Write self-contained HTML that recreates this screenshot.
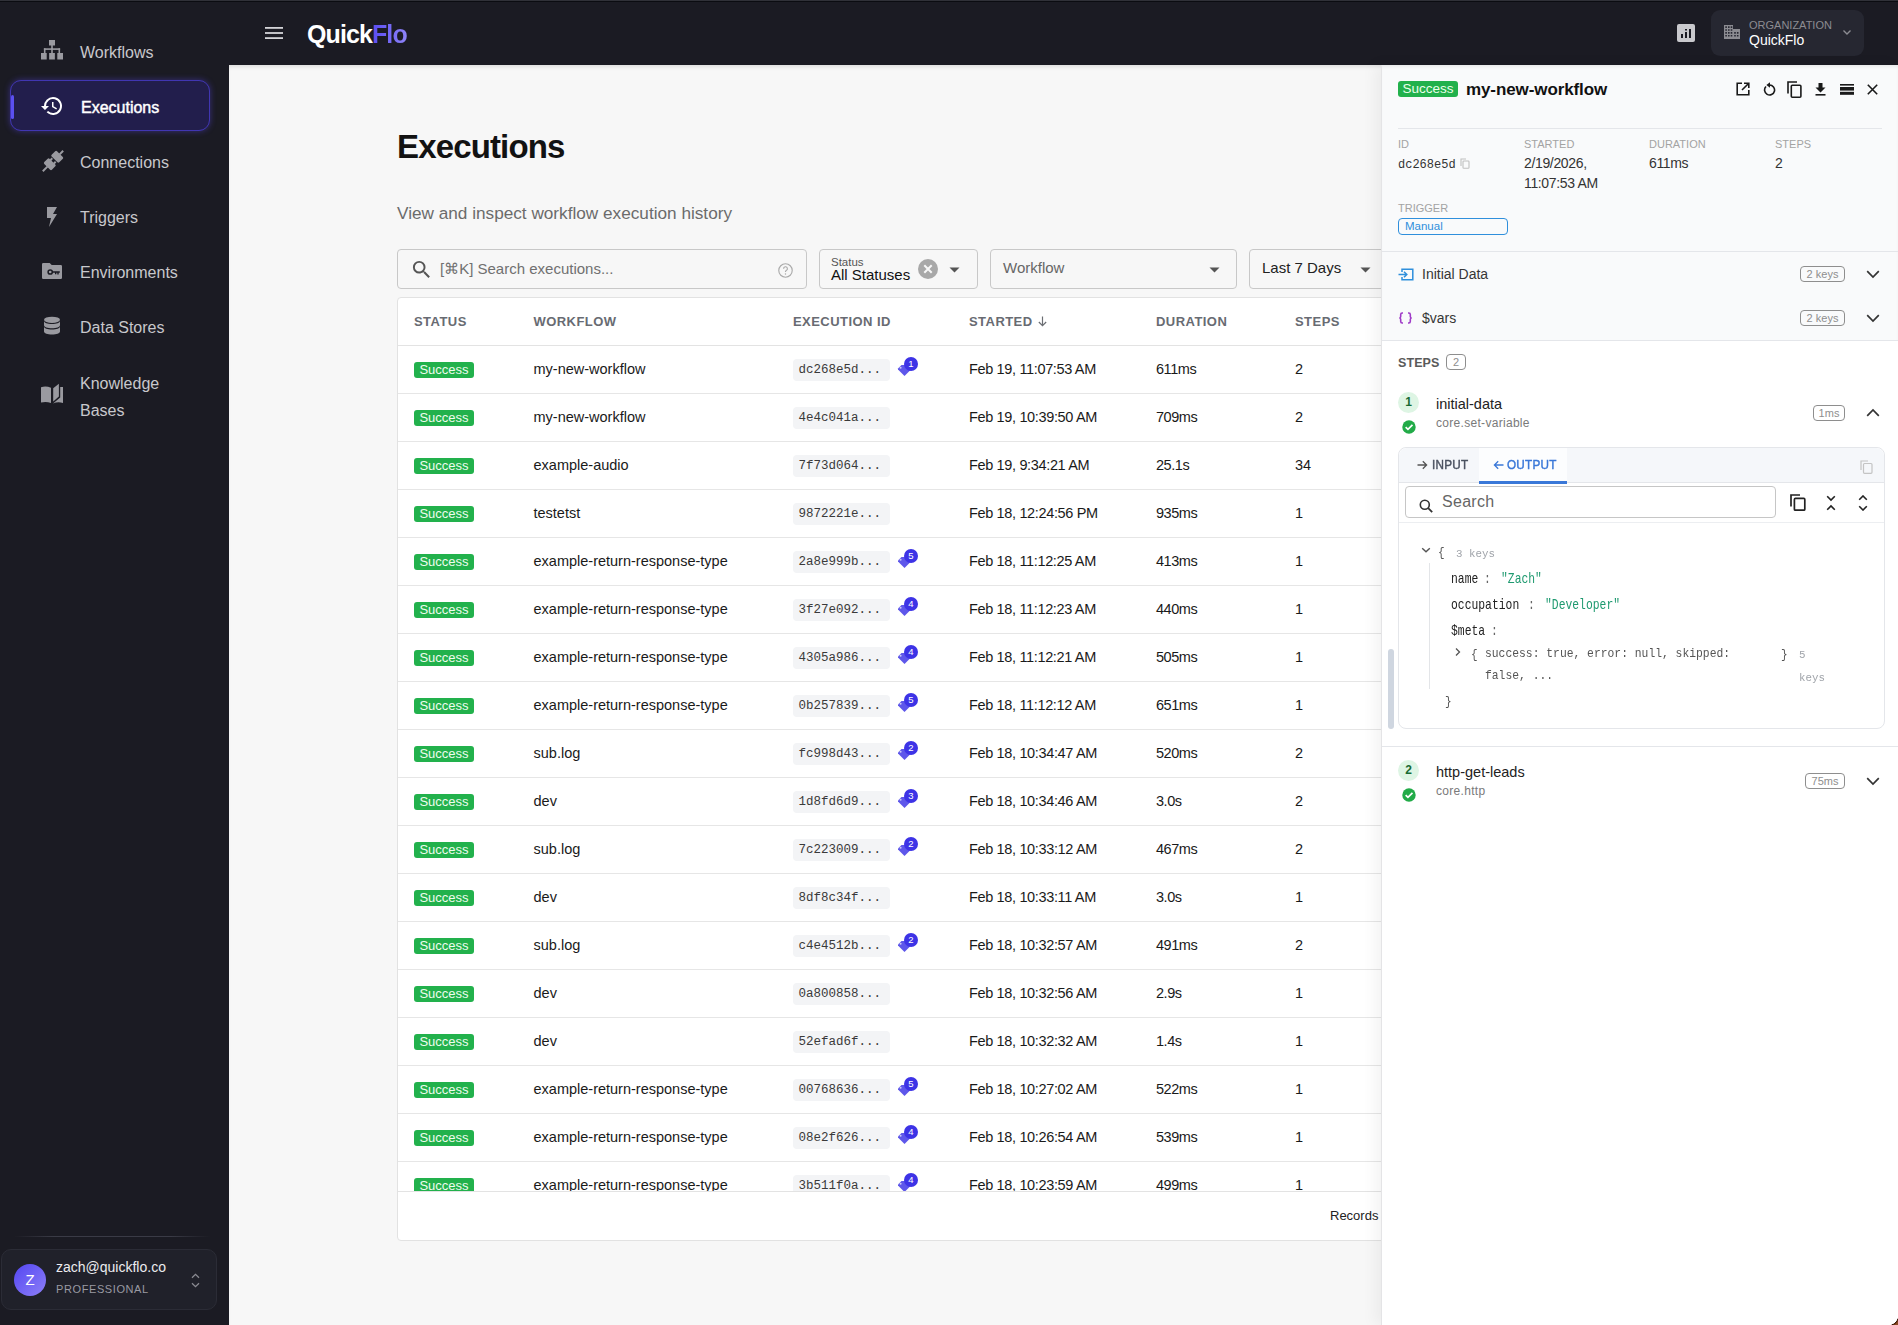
<!DOCTYPE html>
<html><head><meta charset="utf-8">
<style>
*{box-sizing:border-box;margin:0;padding:0}
html,body{width:1898px;height:1325px;overflow:hidden}
body{font-family:"Liberation Sans",sans-serif;background:#f7f7f7;position:relative;color:#111}
.abs{position:absolute}
#topline{z-index:6;left:0;top:0;width:1898px;height:2px;background:linear-gradient(#303138 0,#303138 50%,#0b0c11 50%)}
#side{left:0;top:0;width:229px;height:1325px;background:#1b1b23}
#hdr{left:229px;top:0;width:1669px;height:65px;background:#1b1b23}
.nav{position:absolute;left:10px;width:200px;height:51px;color:#c8c8cc;font-size:16px}
.nav .ic{position:absolute;left:30px;top:15px;width:24px;height:24px}
.nav .tx{position:absolute;left:70px;top:1.5px;line-height:51px;white-space:nowrap}
.nav.act{background:#221e4c;border:1px solid #4136b2;border-radius:11px;box-shadow:0 0 6px rgba(90,70,240,.45);color:#fff}
.nav.act .tx{left:70px;top:0.5px;-webkit-text-stroke:0.45px #fff}
.nav.act .ic{left:29px;top:13px}
.nav.act .bar{position:absolute;left:0px;top:14px;width:3px;height:24px;background:#5b50f0;border-radius:2px}
#main{left:229px;top:65px;width:1669px;height:1260px;background:#f7f7f7;box-shadow:inset 0 4px 5px -3px rgba(0,0,0,.14)}
.box{border:1px solid #c8c8c8;border-radius:4px;background:#f7f7f7}
#card{background:#fff;border:1px solid #e2e2e2;border-radius:4px;overflow:hidden}
.th{border-bottom:1px solid #e3e3e3}
.h{position:absolute;top:16px;font-size:13px;font-weight:bold;color:#686b72;letter-spacing:0.45px;line-height:16px;white-space:nowrap}
.row{position:absolute;left:0;width:1000px;height:48px;border-bottom:1px solid #e6e6e6;font-size:14.5px;color:#1a1a1a}
.row .c{position:absolute;top:14px;line-height:18px;white-space:nowrap}
.ok{position:absolute;left:16px;top:16px;width:60px;height:16px;background:#22b14c;color:#eefcee;border-radius:3px;font-size:13px;line-height:16px;text-align:center}
.wf{left:135.5px}.st{left:571px;letter-spacing:-0.35px}.du{left:758px;letter-spacing:-0.45px}.sp{left:897px}
.eid{position:absolute;left:394.5px;top:13px;width:97px;height:22px;background:#f3f4f6;border-radius:4px;font-family:"Liberation Mono",monospace;font-size:12.5px;color:#3a3a3a;line-height:22px;padding-left:6px;white-space:nowrap}
.tg{position:absolute;left:497px;top:9px}

#panel{z-index:5;left:1381px;top:65px;width:517px;height:1260px;background:#f9fafb;box-shadow:-6px 0 14px rgba(0,0,0,.05), inset 0 3px 4px -2px rgba(0,0,0,.1)}
.pok{left:17px;top:16px;width:60px;height:16px;background:#22b14c;color:#eaffea;border-radius:3px;font-size:13.5px;line-height:16px;text-align:center}
.ml{font-size:11px;color:#a3a3a3;line-height:13px;letter-spacing:0}
.mv{font-size:14px;color:#333;line-height:20px;letter-spacing:-0.35px}
.kc{display:block;height:16px;border:1px solid #8e8e8e;border-radius:4px;font-size:11px;color:#8e8e8e;line-height:14px;text-align:center}
.num{width:21px;height:21px;border-radius:50%;background:#def5e4;color:#176b33;font-size:12px;font-weight:bold;text-align:center;line-height:21px}
.sn{font-size:14.5px;color:#222;line-height:18px;margin-top:1px}
.sd{font-size:12px;color:#7a7a7a;line-height:15px;letter-spacing:0.3px;margin-top:1px}
.jm{font-family:"Liberation Mono",monospace;line-height:1;margin-top:0.7px;white-space:pre;transform-origin:0 0}
#obox{border:1px solid #e4e6ea;border-radius:8px;background:#fff}
.tab{font-size:13px;font-weight:normal;-webkit-text-stroke:0.45px currentColor;letter-spacing:0.3px;line-height:14px;margin-top:-1.5px;transform:scaleX(0.9);transform-origin:0 0}
</style></head>
<body>
<div id="side" class="abs">
  <div class="nav" style="top:25px"><svg class="ic" viewBox="0 0 24 24" fill="#9a9aa0"><rect x="9" y="0" width="6" height="5.5"/><rect x="11.2" y="5" width="1.6" height="4.5"/><rect x="3.9" y="8.3" width="16.2" height="1.6"/><rect x="3.9" y="8.3" width="1.6" height="5"/><rect x="11.2" y="8.3" width="1.6" height="5"/><rect x="18.5" y="8.3" width="1.6" height="5"/><rect x="1" y="13" width="5.7" height="6.5"/><rect x="9.15" y="13" width="5.7" height="6.5"/><rect x="17.3" y="13" width="5.7" height="6.5"/></svg><span class="tx">Workflows</span></div>
  <div class="nav act" style="top:80px"><span class="bar"></span><svg class="ic" viewBox="0 0 24 24" fill="#fff"><path d="M13 3a9 9 0 0 0-9 9H1l3.9 3.9.1.1L9 12H6a7 7 0 1 1 2.05 4.95l-1.42 1.42A9 9 0 1 0 13 3zm-1 5v5l4.28 2.54.72-1.21-3.5-2.08V8H12z"/></svg><span class="tx">Executions</span></div>
  <div class="nav" style="top:135px"><svg class="ic" viewBox="0 0 24 24" fill="#9a9aa0"><g transform="rotate(45 12 12)"><rect x="11" y="-3.8" width="2" height="5"/><rect x="6.6" y="0.8" width="10.8" height="7.6" rx="1.3"/><rect x="6.6" y="11.4" width="10.8" height="7.4" rx="1.3"/><rect x="8.6" y="9.2" width="2" height="3"/><rect x="13.4" y="9.2" width="2" height="3"/><rect x="11" y="18.5" width="2" height="6.5"/></g></svg><span class="tx">Connections</span></div>
  <div class="nav" style="top:190px"><svg class="ic" viewBox="0 0 24 24" fill="#9a9aa0"><path d="M7 2h10l-4 7h4l-8 13 2-9H7z"/></svg><span class="tx">Triggers</span></div>
  <div class="nav" style="top:245px"><svg class="ic" viewBox="0 0 24 24"><path d="M3.2 3h6.5l2 2H20.8a1.2 1.2 0 0 1 1.2 1.2v11.6a1.2 1.2 0 0 1-1.2 1.2H3.2A1.2 1.2 0 0 1 2 17.8V4.2A1.2 1.2 0 0 1 3.2 3z" fill="#9a9aa0"/><circle cx="10.2" cy="12" r="2.1" fill="none" stroke="#1b1b23" stroke-width="1.5"/><path d="M12.2 11.3h7.6v1.5h-1.1v1.7h-1.4v-1.7h-.9v1.4h-1.4v-1.4h-2.8z" fill="#1b1b23"/></svg><span class="tx">Environments</span></div>
  <div class="nav" style="top:300px"><svg class="ic" viewBox="0 0 24 24" fill="#9a9aa0"><ellipse cx="12" cy="4.8" rx="8" ry="3.1"/><path d="M4 5.9c0 1.7 3.6 3 8 3s8-1.3 8-3v4.4c0 1.7-3.6 3-8 3s-8-1.3-8-3z"/><path d="M4 11.4c0 1.7 3.6 3 8 3s8-1.3 8-3v5c0 1.7-3.6 3-8 3s-8-1.3-8-3z"/></svg><span class="tx">Data Stores</span></div>
  <div class="nav" style="top:355px;height:80px"><svg class="ic" style="top:28px" viewBox="0 0 24 24" fill="#9a9aa0"><path d="M1 4.2c3.2-1 6.5-.9 10 .5v15.3c-3.5-1.3-6.8-1.4-10-.4z"/><path d="M13.2 5.2l5.7-4.4v12.6l-5.7 5z"/><path d="M20.2 3.9H23v16c-3.5-1.1-6.8-.9-10 .5l7.2-5.9z"/></svg><span class="tx" style="line-height:27.5px;top:14.5px">Knowledge<br>Bases</span></div>
  <div class="abs" style="left:14px;top:1236px;width:196px;height:1px;background:linear-gradient(90deg,rgba(60,61,72,0),#3a3b46 20%,#3a3b46 80%,rgba(60,61,72,0))"></div>
  <div class="abs" style="left:1px;top:1249px;width:216px;height:61px;background:#20212a;border:1px solid #2b2c36;border-radius:10px">
    <div class="abs" style="left:12px;top:14px;width:32px;height:32px;border-radius:50%;background:linear-gradient(135deg,#5346f2,#8d7ff7);color:#fff;font-size:15px;text-align:center;line-height:32px">Z</div>
    <div class="abs" style="left:54px;top:9px;font-size:14px;color:#ececef;line-height:17px">zach@quickflo.co</div>
    <div class="abs" style="left:54px;top:33px;font-size:11px;color:#9a9aa2;letter-spacing:0.6px;line-height:13px">PROFESSIONAL</div>
    <svg class="abs" style="left:189px;top:23px" width="9" height="15" viewBox="0 0 9 15"><path d="M1 4.8L4.5 1.3 8 4.8M1 10.2l3.5 3.5 3.5-3.5" stroke="#8a8a92" stroke-width="1.3" fill="none"/></svg>
  </div>
</div>
<div id="hdr" class="abs">
  <svg class="abs" style="left:36px;top:27px" width="18" height="12" viewBox="0 0 18 12"><rect y="0" width="18" height="1.8" fill="#d4d4d8"/><rect y="5.1" width="18" height="1.8" fill="#d4d4d8"/><rect y="10.2" width="18" height="1.8" fill="#d4d4d8"/></svg>
  <div class="abs" style="left:78px;top:18px;font-size:25px;font-weight:bold;color:#fff;letter-spacing:-0.9px;line-height:32px">Quick<span style="background:linear-gradient(90deg,#5a4cf2,#8e84f7);-webkit-background-clip:text;background-clip:text;color:transparent">Flo</span></div>
  <div class="abs" style="left:1448px;top:24px;width:18px;height:18px;background:#c9c9cd;border-radius:2px"><svg width="18" height="18" viewBox="0 0 18 18"><rect x="4" y="10" width="2" height="4" fill="#1b1b23"/><rect x="8" y="8" width="2" height="6" fill="#1b1b23"/><rect x="12" y="5" width="2" height="9" fill="#1b1b23"/><rect x="8" y="5" width="2" height="1.5" fill="#1b1b23"/></svg></div>
  <div class="abs" style="left:1482px;top:10px;width:153px;height:46px;background:#262731;border-radius:9px">
    <svg class="abs" style="left:13px;top:15px" width="16" height="14" viewBox="0 0 16 14" fill="#8c8c92"><path d="M0 0h9v4h7v10H0z M1.3 1.3v1.6h1.6V1.3z M4 1.3v1.6h1.6V1.3z M6.7 1.3v1.6h1.6V1.3z M1.3 4.2v1.6h1.6V4.2z M4 4.2v1.6h1.6V4.2z M6.7 4.2v1.6h1.6V4.2z M1.3 7.1v1.6h1.6V7.1z M4 7.1v1.6h1.6V7.1z M6.7 7.1v1.6h1.6V7.1z M1.3 10v1.6h1.6V10z M4 10v1.6h1.6V10z M6.7 10v1.6h1.6V10z M10.2 7.1v1.6h1.6V7.1z M12.9 7.1v1.6h1.6V7.1z M10.2 10v1.6h1.6V10z M12.9 10v1.6h1.6V10z" fill-rule="evenodd"/></svg>
    <div class="abs" style="left:38px;top:9px;font-size:11px;color:#8c8c92;letter-spacing:0;line-height:12px">ORGANIZATION</div>
    <div class="abs" style="left:38px;top:22px;font-size:14px;color:#fff;line-height:16px">QuickFlo</div>
    <svg class="abs" style="left:131px;top:19px" width="10" height="7" viewBox="0 0 10 7"><path d="M1.5 1.5l3.5 3.5 3.5-3.5" stroke="#8c8c92" stroke-width="1.4" fill="none"/></svg>
  </div>
</div>
<div id="panel" class="abs">
  <div class="abs" style="left:0;top:0;width:1px;height:1260px;background:#e4e4e6;z-index:2"></div>
  <div class="abs" style="left:0;top:276px;width:517px;height:984px;background:#fff"></div>
  <span class="abs pok">Success</span>
  <div class="abs" style="left:85px;top:14px;font-size:17px;font-weight:bold;color:#111;line-height:22px;white-space:nowrap;letter-spacing:-0.1px">my-new-workflow</div>
  <svg class="abs" style="left:355px;top:17px" width="14" height="14" viewBox="0 0 14 14"><path d="M6 1.2H1.2v11.6h11.6V8" stroke="#1a1a1a" stroke-width="1.6" fill="none"/><path d="M8 1.2h4.8V6M12.8 1.2L6 8" stroke="#1a1a1a" stroke-width="1.6" fill="none"/></svg>
  <svg class="abs" style="left:382px;top:17px" width="13" height="14" viewBox="0 0 13 14"><path d="M3 4.5A5 5 0 1 0 6.5 3" stroke="#1a1a1a" stroke-width="1.6" fill="none"/><path d="M7 0.2v5.6L3.4 3z" fill="#1a1a1a"/></svg>
  <svg class="abs" style="left:406px;top:16px" width="15" height="17" viewBox="0 0 15 17"><path d="M1 12.5V1h9" stroke="#1a1a1a" stroke-width="1.6" fill="none"/><rect x="4.3" y="4.3" width="9.6" height="11.9" rx="1" stroke="#1a1a1a" stroke-width="1.6" fill="none"/></svg>
  <svg class="abs" style="left:434px;top:18px" width="11" height="13" viewBox="0 0 11 13"><path d="M3.5 0h4v4.5h3L5.5 9.5 0.5 4.5h3z" fill="#1a1a1a"/><rect x="0.5" y="11" width="10" height="1.6" fill="#1a1a1a"/></svg>
  <svg class="abs" style="left:459px;top:19px" width="14" height="11" viewBox="0 0 14 11"><rect x="0" y="0" width="14" height="1.6" fill="#1a1a1a"/><rect x="0" y="3" width="14" height="3.6" fill="#1a1a1a"/><rect x="0" y="7.8" width="14" height="3" fill="#1a1a1a"/></svg>
  <svg class="abs" style="left:486px;top:19px" width="11" height="11" viewBox="0 0 11 11"><path d="M0.8 0.8l9.4 9.4M10.2 0.8l-9.4 9.4" stroke="#1a1a1a" stroke-width="1.6"/></svg>
  <div class="abs" style="left:17px;top:63px;width:484px;height:1px;background:#e4e6ea"></div>
  <div class="abs ml" style="left:17px;top:73px">ID</div>
  <div class="abs ml" style="left:143px;top:73px">STARTED</div>
  <div class="abs ml" style="left:268px;top:73px">DURATION</div>
  <div class="abs ml" style="left:394px;top:73px">STEPS</div>
  <div class="abs" style="left:17px;top:92px;font-family:'Liberation Mono',monospace;font-size:12px;color:#333;line-height:16px">dc268e5d</div>
  <svg class="abs" style="left:79px;top:93px" width="10" height="11" viewBox="0 0 10 11"><path d="M1 8V1h5" stroke="#c0c0c0" stroke-width="1.1" fill="none"/><rect x="3" y="3" width="6" height="7.3" rx="0.8" stroke="#c0c0c0" stroke-width="1.1" fill="none"/></svg>
  <div class="abs mv" style="left:143px;top:88px">2/19/2026,<br>11:07:53 AM</div>
  <div class="abs mv" style="left:268px;top:88px">611ms</div>
  <div class="abs mv" style="left:394px;top:88px">2</div>
  <div class="abs ml" style="left:17px;top:137px">TRIGGER</div>
  <div class="abs" style="left:17px;top:153px;width:110px;height:17px;border:1.5px solid #2f8fdc;border-radius:4px;font-size:11.5px;color:#2f8fdc;line-height:15px;padding-left:6px">Manual</div>
  <div class="abs" style="left:0;top:186px;width:517px;height:1px;background:#e4e6ea"></div>
  <svg class="abs" style="left:17px;top:203px" width="16" height="13" viewBox="0 0 16 13"><path d="M4 4V1.2h10.8v10.6H4V9" stroke="#2f8fdc" stroke-width="1.5" fill="none"/><path d="M0.5 6.5h8M6 3.8l2.8 2.7L6 9.2" stroke="#2f8fdc" stroke-width="1.5" fill="none"/></svg>
  <div class="abs" style="left:41px;top:200px;font-size:14px;color:#363636;line-height:18px">Initial Data</div>
  <span class="abs kc" style="left:419px;top:201px;width:45px">2 keys</span>
  <svg class="abs chev" style="left:485px;top:205px" width="14" height="9" viewBox="0 0 14 9"><path d="M1.2 1.2l5.8 5.8 5.8-5.8" stroke="#333" stroke-width="1.7" fill="none"/></svg>
  <svg class="abs" style="left:17px;top:247px" width="15" height="12" viewBox="0 0 15 12"><path d="M5 1H4.2C3.2 1 2.7 1.5 2.7 2.4V4.5C2.7 5.4 2.3 6 1.3 6C2.3 6 2.7 6.6 2.7 7.5V9.6C2.7 10.5 3.2 11 4.2 11H5M10 1h.8c1 0 1.5.5 1.5 1.4v2.1c0 .9.4 1.5 1.4 1.5-1 0-1.4.6-1.4 1.5v2.1c0 .9-.5 1.4-1.5 1.4H10" stroke="#a03cc8" stroke-width="1.6" fill="none"/></svg>
  <div class="abs" style="left:41px;top:244px;font-size:14px;color:#363636;line-height:18px">$vars</div>
  <span class="abs kc" style="left:419px;top:245px;width:45px">2 keys</span>
  <svg class="abs chev" style="left:485px;top:249px" width="14" height="9" viewBox="0 0 14 9"><path d="M1.2 1.2l5.8 5.8 5.8-5.8" stroke="#333" stroke-width="1.7" fill="none"/></svg>
  <div class="abs" style="left:0;top:275px;width:517px;height:1px;background:#e4e6ea"></div>
  <div class="abs" style="left:17px;top:289.5px;font-size:12.5px;font-weight:bold;color:#5a5a5a;letter-spacing:0.1px;line-height:16px">STEPS</div>
  <span class="abs kc" style="left:65px;top:289px;width:20px;height:16px;line-height:14px">2</span>
  <!-- step 1 -->
  <div class="abs num" style="left:17px;top:327px">1</div>
  <svg class="abs" style="left:21px;top:355px" width="14" height="14" viewBox="0 0 15 15"><circle cx="7.5" cy="7.5" r="7.2" fill="#22ab48"/><path d="M3.9 7.6l2.5 2.5 4.8-4.8" stroke="#fff" stroke-width="1.8" fill="none"/></svg>
  <div class="abs sn" style="left:55px;top:329px">initial-data</div>
  <div class="abs sd" style="left:55px;top:350px">core.set-variable</div>
  <span class="abs kc" style="left:432px;top:340px;width:32px">1ms</span>
  <svg class="abs chev" style="left:485px;top:343px" width="14" height="9" viewBox="0 0 14 9"><path d="M1.2 7.8l5.8-5.8 5.8 5.8" stroke="#333" stroke-width="1.7" fill="none"/></svg>
  <div class="abs" id="obox" style="left:17px;top:382px;width:487px;height:282px">
    <div class="abs" style="left:0;top:0;width:485px;height:35px;background:#f5f7fa;border-bottom:1px solid #e4e6ea;border-radius:8px 8px 0 0"></div>
    <svg class="abs" style="left:18px;top:12px" width="11" height="10" viewBox="0 0 11 10"><path d="M0.5 5h9M5.8 1.2L9.6 5 5.8 8.8" stroke="#555" stroke-width="1.3" fill="none"/></svg>
    <div class="abs tab" style="left:33px;top:11px;color:#4b5260">INPUT</div>
    <div class="abs" style="left:80px;top:0;width:88px;height:35px;background:#fcfdfe"></div>
    <svg class="abs" style="left:94px;top:12px" width="11" height="10" viewBox="0 0 11 10"><path d="M10.5 5h-9M5.2 1.2L1.4 5l3.8 3.8" stroke="#3a78d8" stroke-width="1.3" fill="none"/></svg>
    <div class="abs tab" style="left:108px;top:11px;color:#3a78d8">OUTPUT</div>
    <div class="abs" style="left:80px;top:33px;width:88px;height:3px;background:#3a78d8"></div>
    <svg class="abs" style="left:461px;top:12px" width="13" height="14" viewBox="0 0 13 14"><path d="M1 10V1h7" stroke="#c4c4c4" stroke-width="1.2" fill="none"/><rect x="3.5" y="3.5" width="8.5" height="9.8" rx="1" stroke="#c4c4c4" stroke-width="1.2" fill="none"/></svg>
    <div class="abs" style="left:6px;top:38px;width:371px;height:32px;border:1px solid #c6c6c6;border-radius:4px;background:#fff"></div>
    <svg class="abs" style="left:20px;top:51px" width="14" height="14" viewBox="0 0 14 14"><circle cx="5.8" cy="5.8" r="4.5" stroke="#333" stroke-width="1.6" fill="none"/><path d="M9.2 9.2l4 4" stroke="#333" stroke-width="1.8"/></svg>
    <div class="abs" style="left:43px;top:45px;font-size:16px;color:#666;letter-spacing:0.3px;line-height:18px">Search</div>
    <svg class="abs" style="left:391px;top:46px" width="16" height="17" viewBox="0 0 16 17"><path d="M1 12.5V1h9" stroke="#222" stroke-width="1.7" fill="none"/><rect x="4.4" y="4.4" width="10.4" height="11.8" rx="1" stroke="#222" stroke-width="1.7" fill="none"/></svg>
    <svg class="abs" style="left:427px;top:47px" width="10" height="16" viewBox="0 0 10 16"><path d="M1.2 1.2L5 5l3.8-3.8M1.2 14.8L5 11l3.8 3.8" stroke="#222" stroke-width="1.6" fill="none"/></svg>
    <svg class="abs" style="left:459px;top:47px" width="10" height="16" viewBox="0 0 10 16"><path d="M1.2 4.8L5 1l3.8 3.8M1.2 11.2L5 15l3.8-3.8" stroke="#222" stroke-width="1.6" fill="none"/></svg>
    <div class="abs" style="left:0;top:74px;width:485px;height:1px;background:#eceef1"></div>
    <svg class="abs" style="left:4px;top:165px" width="1" height="1"></svg>
    <div class="abs" style="left:13px;top:100px;width:0;height:0"></div>
  </div>
  <svg class="abs" style="left:40px;top:481px" width="10" height="8" viewBox="0 0 10 8"><path d="M1.2 2.2L5 5.8l3.8-3.6" stroke="#555" stroke-width="1.4" fill="none"/></svg>
<div class="abs jm" style="left:56.5px;top:480.5px;font-size:13px;color:#555;transform:scaleX(0.85);">{</div>
<div class="abs jm" style="left:75.0px;top:482.1px;font-size:11.5px;color:#a0a4aa;transform:scaleX(0.94);">3 keys</div>
<div class="abs" style="left:48px;top:498px;width:1px;height:126px;background:#e3e5e8"></div>
<div class="abs jm" style="left:69.5px;top:506.1px;font-size:14.4px;color:#222;transform:scaleX(0.79);">name</div>
<div class="abs jm" style="left:103.0px;top:506.1px;font-size:14.4px;color:#666;transform:scaleX(0.79);">:</div>
<div class="abs jm" style="left:120.0px;top:506.1px;font-size:14.4px;color:#1f9a70;transform:scaleX(0.79);">"Zach"</div>
<div class="abs jm" style="left:69.5px;top:532.6px;font-size:14.4px;color:#222;transform:scaleX(0.79);">occupation</div>
<div class="abs jm" style="left:146.5px;top:532.6px;font-size:14.4px;color:#666;transform:scaleX(0.79);">:</div>
<div class="abs jm" style="left:163.5px;top:532.6px;font-size:14.4px;color:#1f9a70;transform:scaleX(0.79);">"Developer"</div>
<div class="abs jm" style="left:69.5px;top:558.4px;font-size:14.4px;color:#222;transform:scaleX(0.79);">$meta</div>
<div class="abs jm" style="left:110.0px;top:558.4px;font-size:14.4px;color:#666;transform:scaleX(0.79);">:</div>
<svg class="abs" style="left:73px;top:582px" width="8" height="10" viewBox="0 0 8 10"><path d="M2 1.5l3.5 3.5L2 8.5" stroke="#555" stroke-width="1.3" fill="none"/></svg>
<div class="abs jm" style="left:89.5px;top:582.5px;font-size:13px;color:#555;transform:scaleX(0.85);">{</div>
<div class="abs jm" style="left:104.4px;top:582.6px;font-size:12.9px;color:#555;transform:scaleX(0.88);">success: true, error: null, skipped:</div>
<div class="abs jm" style="left:104.4px;top:604.4px;font-size:12.9px;color:#555;transform:scaleX(0.88);">false, ...</div>
<div class="abs jm" style="left:399.5px;top:582.5px;font-size:13px;color:#555;transform:scaleX(0.85);">}</div>
<div class="abs jm" style="left:418.0px;top:583.7px;font-size:11.5px;color:#a0a4aa;transform:scaleX(0.94);">5</div>
<div class="abs jm" style="left:418.0px;top:606.2px;font-size:11.5px;color:#a0a4aa;transform:scaleX(0.94);">keys</div>
<div class="abs jm" style="left:63.5px;top:629.5px;font-size:13px;color:#555;transform:scaleX(0.85);">}</div>
  <div class="abs" style="left:7px;top:584px;width:6px;height:80px;background:#cfd6e0;border-radius:3px"></div>
  <div class="abs" style="left:0;top:681px;width:517px;height:1px;background:#e4e6ea"></div>
  <!-- step 2 -->
  <div class="abs num" style="left:17px;top:695px">2</div>
  <svg class="abs" style="left:21px;top:723px" width="14" height="14" viewBox="0 0 15 15"><circle cx="7.5" cy="7.5" r="7.2" fill="#22ab48"/><path d="M3.9 7.6l2.5 2.5 4.8-4.8" stroke="#fff" stroke-width="1.8" fill="none"/></svg>
  <div class="abs sn" style="left:55px;top:697px">http-get-leads</div>
  <div class="abs sd" style="left:55px;top:718px">core.http</div>
  <span class="abs kc" style="left:424px;top:708px;width:40px">75ms</span>
  <svg class="abs chev" style="left:485px;top:712px" width="14" height="9" viewBox="0 0 14 9"><path d="M1.2 1.2l5.8 5.8 5.8-5.8" stroke="#333" stroke-width="1.7" fill="none"/></svg>
</div>
<div id="topline" class="abs"></div>
<div class="abs" style="z-index:7;left:1888px;top:1315px;width:10px;height:10px;background:radial-gradient(circle at 0 0,rgba(0,0,0,0) 10px,#3a1a0a 10.5px,#8a4820 12px)"></div>
<div id="main" class="abs">
  <div class="abs" style="left:168px;top:62px;font-size:33px;font-weight:bold;color:#121212;line-height:40px;letter-spacing:-0.85px">Executions</div>
  <div class="abs" style="left:168px;top:137px;font-size:17.2px;color:#6b6b6b;line-height:22px">View and inspect workflow execution history</div>
  <div class="abs box" style="left:168px;top:184px;width:410px;height:40px">
    <svg class="abs" style="left:12px;top:7.5px" width="23.3" height="23.3" viewBox="0 0 24 24"><path d="M15.5 14h-.79l-.28-.27A6.47 6.47 0 0 0 16 9.5 6.5 6.5 0 1 0 9.5 16c1.61 0 3.09-.59 4.23-1.57l.27.28v.79l5 4.99L20.49 19zm-6 0C7.01 14 5 11.99 5 9.5S7.01 5 9.5 5 14 7.01 14 9.5 11.99 14 9.5 14z" fill="#555"/></svg>
    <div class="abs" style="left:42px;top:10px;font-size:15px;color:#707070;line-height:18px">[&#8984;K] Search executions...</div>
    <svg class="abs" style="left:379px;top:12px" width="17" height="17" viewBox="0 0 24 24"><circle cx="12" cy="12" r="9.5" stroke="#aaa" stroke-width="1.6" fill="none"/><path d="M9.3 9.5a2.7 2.7 0 1 1 3.8 2.4c-.7.4-1.1.9-1.1 1.7v.6" stroke="#aaa" stroke-width="1.6" fill="none"/><circle cx="12" cy="17" r="1" fill="#aaa"/></svg>
  </div>
  <div class="abs box" style="left:590px;top:184px;width:159px;height:40px">
    <div class="abs" style="left:11px;top:6px;font-size:11.5px;color:#555;line-height:13px">Status</div>
    <div class="abs" style="left:11px;top:16px;font-size:15px;color:#111;line-height:18px">All Statuses</div>
    <svg class="abs" style="left:98px;top:9px" width="20" height="20" viewBox="0 0 20 20"><circle cx="10" cy="10" r="10" fill="#a8a8a8"/><path d="M6.3 6.3l7.4 7.4M13.7 6.3l-7.4 7.4" stroke="#f7f7f7" stroke-width="2"/></svg>
    <svg class="abs" style="left:129px;top:17px" width="11" height="6" viewBox="0 0 11 6"><path d="M0.5 0.5h10l-5 5z" fill="#555"/></svg>
  </div>
  <div class="abs box" style="left:761px;top:184px;width:247px;height:40px">
    <div class="abs" style="left:12px;top:9px;font-size:15px;color:#666;line-height:18px">Workflow</div>
    <svg class="abs" style="left:218px;top:17px" width="11" height="6" viewBox="0 0 11 6"><path d="M0.5 0.5h10l-5 5z" fill="#555"/></svg>
  </div>
  <div class="abs box" style="left:1020px;top:184px;width:160px;height:40px">
    <div class="abs" style="left:12px;top:9px;font-size:15px;color:#222;line-height:18px">Last 7 Days</div>
    <svg class="abs" style="left:110px;top:17px" width="11" height="6" viewBox="0 0 11 6"><path d="M0.5 0.5h10l-5 5z" fill="#555"/></svg>
  </div>
  <div class="abs" id="card" style="left:168px;top:232px;width:1000px;height:944px">
    <div class="abs th" style="left:0;top:0;width:1000px;height:48px">
      <span class="h" style="left:16px">STATUS</span><span class="h" style="left:135.5px">WORKFLOW</span><span class="h" style="left:395px">EXECUTION ID</span><span class="h" style="left:571px">STARTED <svg style="vertical-align:-2px;margin-left:0" width="11" height="13" viewBox="0 0 12 13"><path d="M6 1v10M2 7l4 4 4-4" stroke="#6b6e73" stroke-width="1.3" fill="none"/></svg></span><span class="h" style="left:758px">DURATION</span><span class="h" style="left:897px">STEPS</span>
    </div>
    <div class="abs" id="tbody" style="left:0;top:48px;width:1000px;height:845px;overflow:hidden">
      <div class="row" style="top:0px"><span class="ok">Success</span><span class="c wf">my-new-workflow</span><span class="eid">dc268e5d...</span><svg class="tg" width="26" height="24" viewBox="0 0 26 24"><path d="M3 13.5L6.5 10H16v4.5L9.5 21 3 14.5z" fill="#5e57ea"/><circle cx="5.6" cy="12.8" r="1" fill="#c9c6f7"/><circle cx="16" cy="9" r="7" fill="#3d33e6"/><text x="16" y="12.4" font-size="9.5" fill="#fff" text-anchor="middle" font-family="Liberation Sans">1</text></svg><span class="c st">Feb 19, 11:07:53 AM</span><span class="c du">611ms</span><span class="c sp">2</span></div><div class="row" style="top:48px"><span class="ok">Success</span><span class="c wf">my-new-workflow</span><span class="eid">4e4c041a...</span><span class="c st">Feb 19, 10:39:50 AM</span><span class="c du">709ms</span><span class="c sp">2</span></div><div class="row" style="top:96px"><span class="ok">Success</span><span class="c wf">example-audio</span><span class="eid">7f73d064...</span><span class="c st">Feb 19, 9:34:21 AM</span><span class="c du">25.1s</span><span class="c sp">34</span></div><div class="row" style="top:144px"><span class="ok">Success</span><span class="c wf">testetst</span><span class="eid">9872221e...</span><span class="c st">Feb 18, 12:24:56 PM</span><span class="c du">935ms</span><span class="c sp">1</span></div><div class="row" style="top:192px"><span class="ok">Success</span><span class="c wf">example-return-response-type</span><span class="eid">2a8e999b...</span><svg class="tg" width="26" height="24" viewBox="0 0 26 24"><path d="M3 13.5L6.5 10H16v4.5L9.5 21 3 14.5z" fill="#5e57ea"/><circle cx="5.6" cy="12.8" r="1" fill="#c9c6f7"/><circle cx="16" cy="9" r="7" fill="#3d33e6"/><text x="16" y="12.4" font-size="9.5" fill="#fff" text-anchor="middle" font-family="Liberation Sans">5</text></svg><span class="c st">Feb 18, 11:12:25 AM</span><span class="c du">413ms</span><span class="c sp">1</span></div><div class="row" style="top:240px"><span class="ok">Success</span><span class="c wf">example-return-response-type</span><span class="eid">3f27e092...</span><svg class="tg" width="26" height="24" viewBox="0 0 26 24"><path d="M3 13.5L6.5 10H16v4.5L9.5 21 3 14.5z" fill="#5e57ea"/><circle cx="5.6" cy="12.8" r="1" fill="#c9c6f7"/><circle cx="16" cy="9" r="7" fill="#3d33e6"/><text x="16" y="12.4" font-size="9.5" fill="#fff" text-anchor="middle" font-family="Liberation Sans">4</text></svg><span class="c st">Feb 18, 11:12:23 AM</span><span class="c du">440ms</span><span class="c sp">1</span></div><div class="row" style="top:288px"><span class="ok">Success</span><span class="c wf">example-return-response-type</span><span class="eid">4305a986...</span><svg class="tg" width="26" height="24" viewBox="0 0 26 24"><path d="M3 13.5L6.5 10H16v4.5L9.5 21 3 14.5z" fill="#5e57ea"/><circle cx="5.6" cy="12.8" r="1" fill="#c9c6f7"/><circle cx="16" cy="9" r="7" fill="#3d33e6"/><text x="16" y="12.4" font-size="9.5" fill="#fff" text-anchor="middle" font-family="Liberation Sans">4</text></svg><span class="c st">Feb 18, 11:12:21 AM</span><span class="c du">505ms</span><span class="c sp">1</span></div><div class="row" style="top:336px"><span class="ok">Success</span><span class="c wf">example-return-response-type</span><span class="eid">0b257839...</span><svg class="tg" width="26" height="24" viewBox="0 0 26 24"><path d="M3 13.5L6.5 10H16v4.5L9.5 21 3 14.5z" fill="#5e57ea"/><circle cx="5.6" cy="12.8" r="1" fill="#c9c6f7"/><circle cx="16" cy="9" r="7" fill="#3d33e6"/><text x="16" y="12.4" font-size="9.5" fill="#fff" text-anchor="middle" font-family="Liberation Sans">5</text></svg><span class="c st">Feb 18, 11:12:12 AM</span><span class="c du">651ms</span><span class="c sp">1</span></div><div class="row" style="top:384px"><span class="ok">Success</span><span class="c wf">sub.log</span><span class="eid">fc998d43...</span><svg class="tg" width="26" height="24" viewBox="0 0 26 24"><path d="M3 13.5L6.5 10H16v4.5L9.5 21 3 14.5z" fill="#5e57ea"/><circle cx="5.6" cy="12.8" r="1" fill="#c9c6f7"/><circle cx="16" cy="9" r="7" fill="#3d33e6"/><text x="16" y="12.4" font-size="9.5" fill="#fff" text-anchor="middle" font-family="Liberation Sans">2</text></svg><span class="c st">Feb 18, 10:34:47 AM</span><span class="c du">520ms</span><span class="c sp">2</span></div><div class="row" style="top:432px"><span class="ok">Success</span><span class="c wf">dev</span><span class="eid">1d8fd6d9...</span><svg class="tg" width="26" height="24" viewBox="0 0 26 24"><path d="M3 13.5L6.5 10H16v4.5L9.5 21 3 14.5z" fill="#5e57ea"/><circle cx="5.6" cy="12.8" r="1" fill="#c9c6f7"/><circle cx="16" cy="9" r="7" fill="#3d33e6"/><text x="16" y="12.4" font-size="9.5" fill="#fff" text-anchor="middle" font-family="Liberation Sans">3</text></svg><span class="c st">Feb 18, 10:34:46 AM</span><span class="c du">3.0s</span><span class="c sp">2</span></div><div class="row" style="top:480px"><span class="ok">Success</span><span class="c wf">sub.log</span><span class="eid">7c223009...</span><svg class="tg" width="26" height="24" viewBox="0 0 26 24"><path d="M3 13.5L6.5 10H16v4.5L9.5 21 3 14.5z" fill="#5e57ea"/><circle cx="5.6" cy="12.8" r="1" fill="#c9c6f7"/><circle cx="16" cy="9" r="7" fill="#3d33e6"/><text x="16" y="12.4" font-size="9.5" fill="#fff" text-anchor="middle" font-family="Liberation Sans">2</text></svg><span class="c st">Feb 18, 10:33:12 AM</span><span class="c du">467ms</span><span class="c sp">2</span></div><div class="row" style="top:528px"><span class="ok">Success</span><span class="c wf">dev</span><span class="eid">8df8c34f...</span><span class="c st">Feb 18, 10:33:11 AM</span><span class="c du">3.0s</span><span class="c sp">1</span></div><div class="row" style="top:576px"><span class="ok">Success</span><span class="c wf">sub.log</span><span class="eid">c4e4512b...</span><svg class="tg" width="26" height="24" viewBox="0 0 26 24"><path d="M3 13.5L6.5 10H16v4.5L9.5 21 3 14.5z" fill="#5e57ea"/><circle cx="5.6" cy="12.8" r="1" fill="#c9c6f7"/><circle cx="16" cy="9" r="7" fill="#3d33e6"/><text x="16" y="12.4" font-size="9.5" fill="#fff" text-anchor="middle" font-family="Liberation Sans">2</text></svg><span class="c st">Feb 18, 10:32:57 AM</span><span class="c du">491ms</span><span class="c sp">2</span></div><div class="row" style="top:624px"><span class="ok">Success</span><span class="c wf">dev</span><span class="eid">0a800858...</span><span class="c st">Feb 18, 10:32:56 AM</span><span class="c du">2.9s</span><span class="c sp">1</span></div><div class="row" style="top:672px"><span class="ok">Success</span><span class="c wf">dev</span><span class="eid">52efad6f...</span><span class="c st">Feb 18, 10:32:32 AM</span><span class="c du">1.4s</span><span class="c sp">1</span></div><div class="row" style="top:720px"><span class="ok">Success</span><span class="c wf">example-return-response-type</span><span class="eid">00768636...</span><svg class="tg" width="26" height="24" viewBox="0 0 26 24"><path d="M3 13.5L6.5 10H16v4.5L9.5 21 3 14.5z" fill="#5e57ea"/><circle cx="5.6" cy="12.8" r="1" fill="#c9c6f7"/><circle cx="16" cy="9" r="7" fill="#3d33e6"/><text x="16" y="12.4" font-size="9.5" fill="#fff" text-anchor="middle" font-family="Liberation Sans">5</text></svg><span class="c st">Feb 18, 10:27:02 AM</span><span class="c du">522ms</span><span class="c sp">1</span></div><div class="row" style="top:768px"><span class="ok">Success</span><span class="c wf">example-return-response-type</span><span class="eid">08e2f626...</span><svg class="tg" width="26" height="24" viewBox="0 0 26 24"><path d="M3 13.5L6.5 10H16v4.5L9.5 21 3 14.5z" fill="#5e57ea"/><circle cx="5.6" cy="12.8" r="1" fill="#c9c6f7"/><circle cx="16" cy="9" r="7" fill="#3d33e6"/><text x="16" y="12.4" font-size="9.5" fill="#fff" text-anchor="middle" font-family="Liberation Sans">4</text></svg><span class="c st">Feb 18, 10:26:54 AM</span><span class="c du">539ms</span><span class="c sp">1</span></div><div class="row" style="top:816px"><span class="ok">Success</span><span class="c wf">example-return-response-type</span><span class="eid">3b511f0a...</span><svg class="tg" width="26" height="24" viewBox="0 0 26 24"><path d="M3 13.5L6.5 10H16v4.5L9.5 21 3 14.5z" fill="#5e57ea"/><circle cx="5.6" cy="12.8" r="1" fill="#c9c6f7"/><circle cx="16" cy="9" r="7" fill="#3d33e6"/><text x="16" y="12.4" font-size="9.5" fill="#fff" text-anchor="middle" font-family="Liberation Sans">4</text></svg><span class="c st">Feb 18, 10:23:59 AM</span><span class="c du">499ms</span><span class="c sp">1</span></div>
    </div>
    <div class="abs" style="left:0;top:893px;width:1000px;height:1px;background:#e3e3e3"></div>
    <div class="abs" style="left:932px;top:910px;font-size:13px;color:#222;line-height:16px;white-space:nowrap">Records per page</div>
  </div>
</div>
</body></html>
